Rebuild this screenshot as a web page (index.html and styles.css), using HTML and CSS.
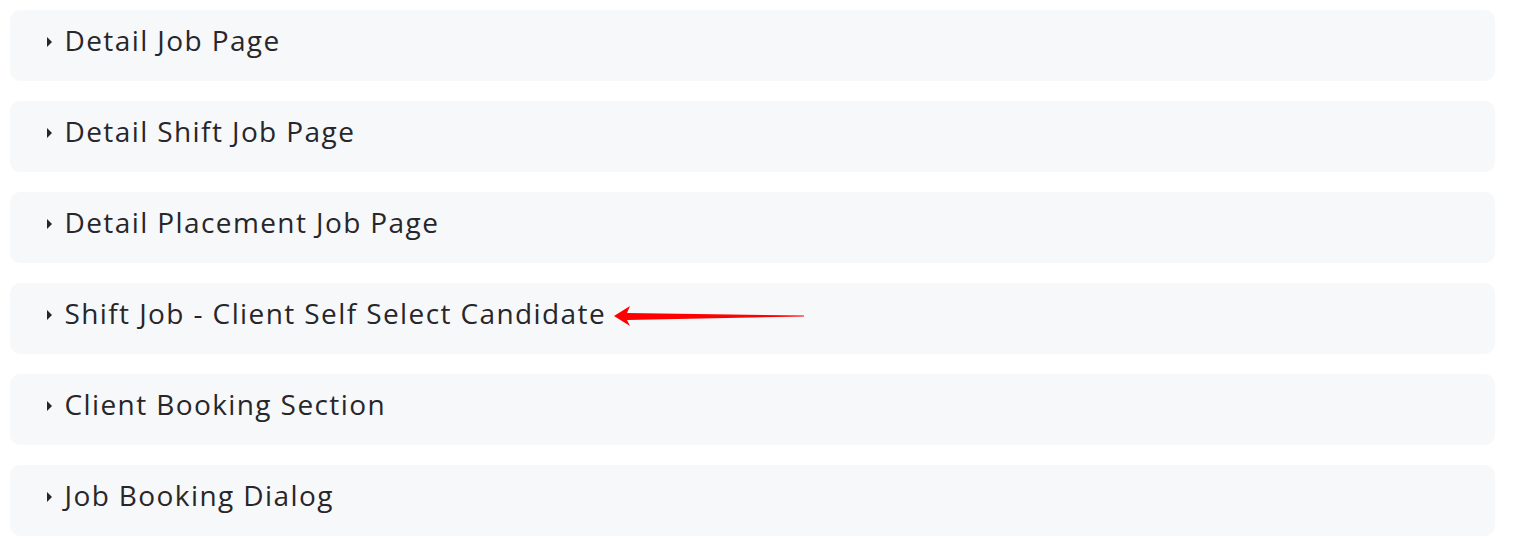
FILE: index.html
```html
<!DOCTYPE html>
<html lang="en">
<head>
<meta charset="utf-8">
<title>Sections</title>
<link rel="stylesheet" href="styles.css">
</head>
<body>
<div class="list">
  <div class="item"><span class="caret"></span><span class="label">Detail Job Page</span></div>
  <div class="item"><span class="caret"></span><span class="label">Detail Shift Job Page</span></div>
  <div class="item"><span class="caret"></span><span class="label">Detail Placement Job Page</span></div>
  <div class="item"><span class="caret"></span><span class="label">Shift Job - Client Self Select Candidate</span>
    <svg class="arrow" width="200" height="24" viewBox="0 0 200 24">
      <path d="M2 11 L18 1 L15 8 L192 10.6 L192 11.4 L15 15 L18 21 Z" fill="#ff0000"/>
    </svg>
  </div>
  <div class="item"><span class="caret"></span><span class="label">Client Booking Section</span></div>
  <div class="item"><span class="caret"></span><span class="label">Job Booking Dialog</span></div>
</div>
</body>
</html>
```
FILE: styles.css
```css
html, body {
  margin: 0;
  padding: 0;
  background: #ffffff;
}
body {
  font-family: "Open Sans", "Lato", sans-serif;
  color: #27272b;
}
.list {
  display: flex;
  flex-direction: column;
  gap: 20px;
  padding: 10px 41px 0 10px;
}
.item {
  position: relative;
  height: 71px;
  background: #f7f8fa;
  border-radius: 10px;
  display: flex;
  align-items: center;
  padding-left: 37px;
  box-sizing: border-box;
}
.caret {
  width: 0;
  height: 0;
  border-top: 5px solid transparent;
  border-bottom: 5px solid transparent;
  border-left: 5.5px solid #27272b;
  margin-right: 12.5px;
  margin-top: -7px;
}
.label {
  font-size: 28px;
  line-height: 1;
  letter-spacing: 1.4px;
  margin-top: -11px;
}
.arrow {
  display: block;
  margin-left: 6px;
  margin-top: -4px;
}
```
